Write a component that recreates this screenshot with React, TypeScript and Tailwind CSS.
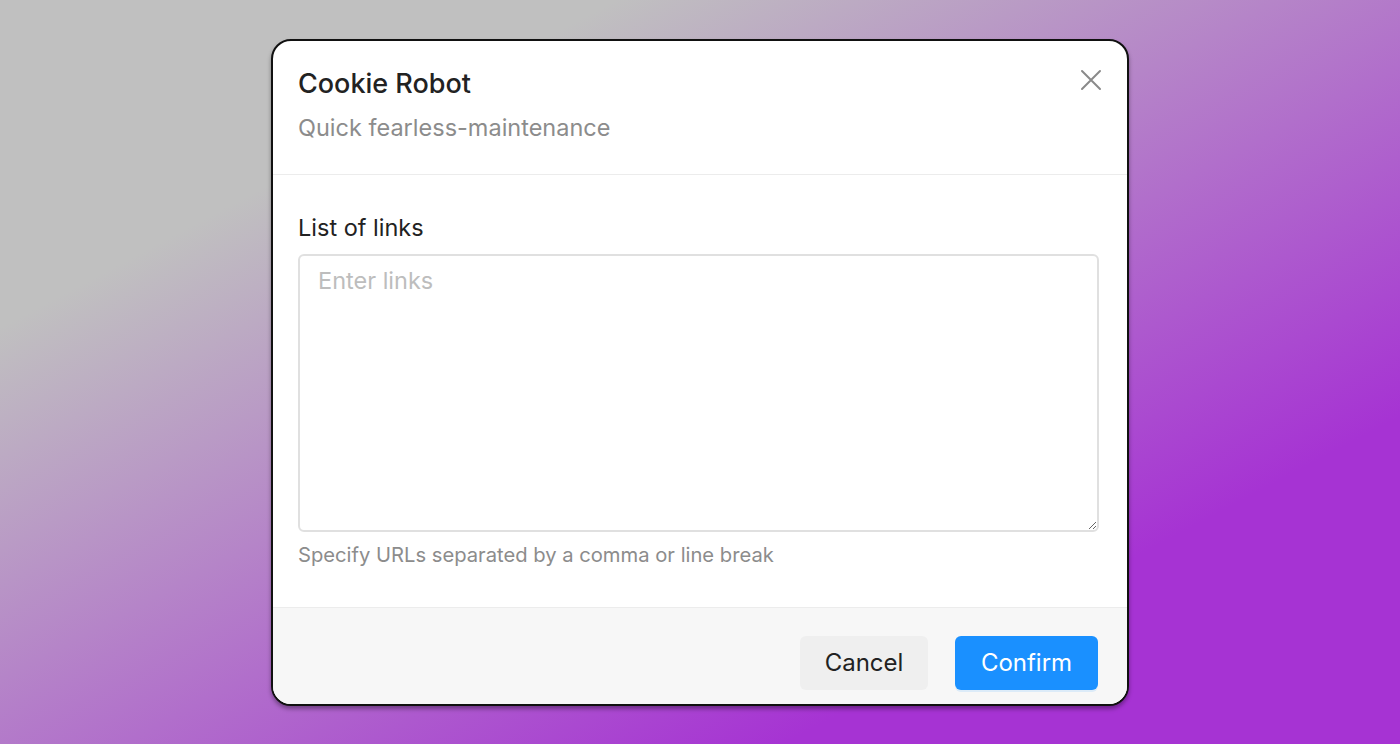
export default function App() {
  return (
    <div className="flex h-[744px] w-full items-center justify-center bg-[linear-gradient(to_bottom_right,#c0c0c0_22%,#a633d3_78%)] font-['Inter',sans-serif]">
      <div className="flex h-[667px] w-[858px] flex-col overflow-hidden rounded-[20px] border-2 border-[#111] bg-white shadow-[0_3px_4px_rgba(0,0,0,0.35)]">
        <div className="relative border-b border-[#ececec] pt-[26px] pr-[28px] pb-[30px] pl-[25px]">
          <h2 className="text-[27px] leading-[34px] font-medium text-[#222]">Cookie Robot</h2>
          <p className="mt-[11px] text-[23.5px] leading-[32px] text-[#8c8c8c]">Quick fearless-maintenance</p>
          <button className="absolute top-[27px] right-[24px] flex h-[24px] w-[24px] items-center justify-center text-[#8a8a8a]">
            <svg width="22" height="22" viewBox="0 0 22 22" fill="none" stroke="currentColor" strokeWidth="2" strokeLinecap="round">
              <path d="M2 2l18 18M20 2L2 20" />
            </svg>
          </button>
        </div>

        <div className="flex flex-1 flex-col pt-[38px] pr-[28px] pl-[25px]">
          <label className="text-[23.5px] leading-[30px] text-[#222]">List of links</label>
          <textarea
            placeholder="Enter links"
            className="mt-[11px] h-[278px] w-full resize-y rounded-[6px] border-2 border-[#e0e0e0] px-[18px] py-[9px] text-[23.5px] leading-[32px] text-[#222] outline-none placeholder:text-[#bdbdbd]"
          />
          <p className="mt-[10px] text-[20.2px] leading-[26px] text-[#8c8c8c]">Specify URLs separated by a comma or line break</p>
        </div>

        <div className="flex h-[97px] items-start justify-end gap-[27px] border-t border-[#ececec] bg-[#f7f7f7] pt-[28px] pr-[29px]">
          <button className="h-[54px] w-[128px] rounded-[6px] bg-[#efefef] text-[24px] text-[#222]">Cancel</button>
          <button className="h-[54px] w-[143px] rounded-[6px] bg-[#1a90ff] text-[24px] text-white shadow-[0_2px_0_rgba(26,144,255,0.12)]">Confirm</button>
        </div>
      </div>
    </div>
  );
}
